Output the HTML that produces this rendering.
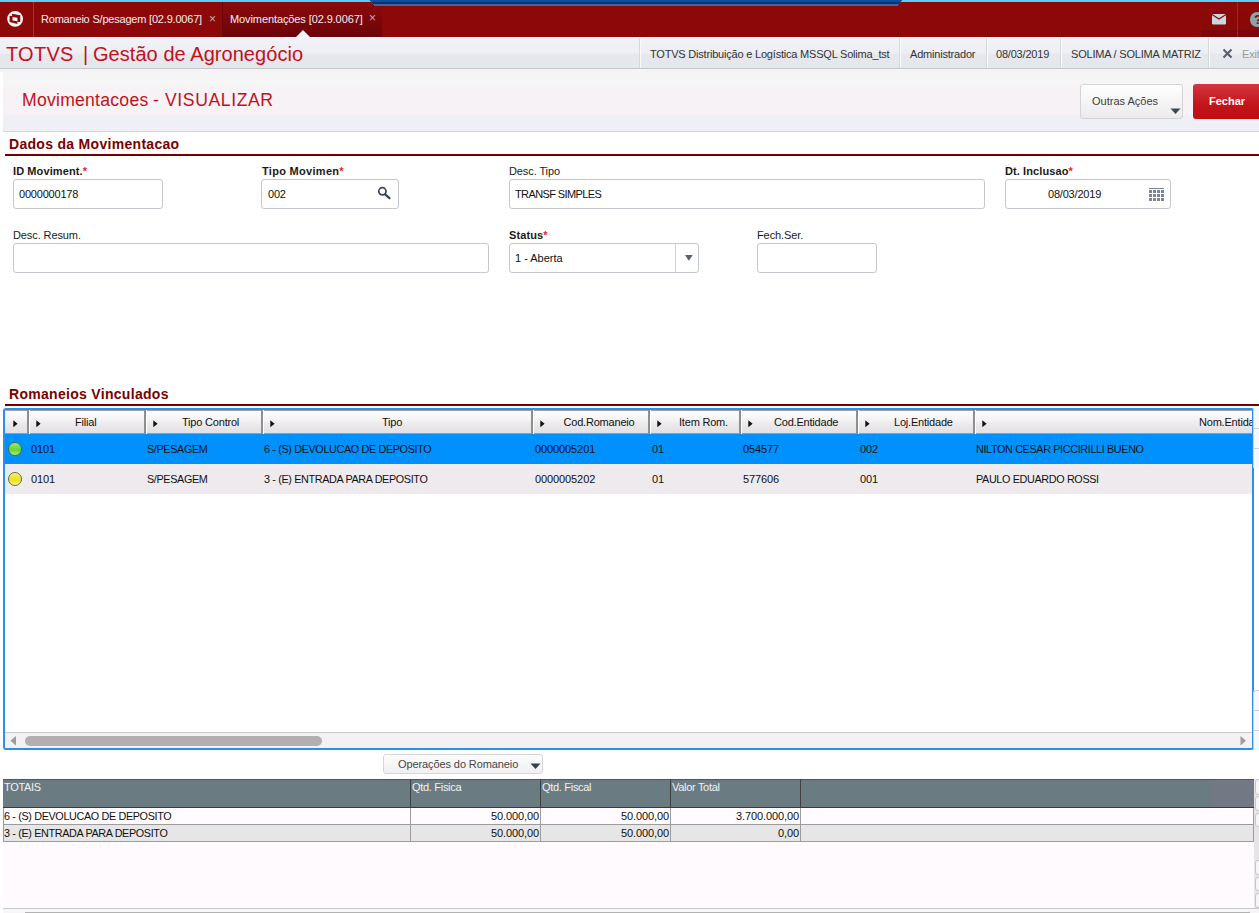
<!DOCTYPE html>
<html><head><meta charset="utf-8">
<style>
*{box-sizing:border-box;margin:0;padding:0}
html,body{width:1259px;height:913px;overflow:hidden;background:#fff;font-family:"Liberation Sans",sans-serif;font-size:11px;color:#222}
.a{position:absolute}
.t{position:absolute;white-space:nowrap;line-height:1}
#topline{left:0;top:0;width:1259px;height:2px;background:#5fcbf3}
#bar{left:0;top:2px;width:1259px;height:35px;background:#8d0909}
.tabtxt{color:#f4eef4;font-size:11px;letter-spacing:-0.2px}
.sub{left:0;top:37px;width:1259px;height:32px;background:linear-gradient(#f1f1f7 0,#eeeff5 50%,#e6e8ee 54%,#e4e7ec 100%);border-top:1px solid #fbfbfd;border-bottom:1px solid #c5c8cb}
.subtxt{color:#333;font-size:11px;letter-spacing:-0.2px}
.vsep{position:absolute;width:1px;background:#d5d9d6;box-shadow:1px 0 0 #fafafa}
.panel{left:3px;top:69px;width:1256px;height:63px;background:linear-gradient(#f6f3f6 0,#f6f3f6 3px,#f6f6f6 4px,#f6f5f6 16px,#f6f2f5 20px,#f6f2f5 45px,#eef0f6 47px,#eef0f6);border-bottom:1px solid #d6d6da}
.sect{color:#7a0000;font-size:14px;font-weight:bold;letter-spacing:0.3px}
.uline{height:2px;background:#720000}
.lbl{font-size:11px;color:#1a1a1a;letter-spacing:-0.1px}
.lblb{font-size:11px;font-weight:bold;color:#1a1a1a;letter-spacing:0.1px}
.req{color:#ed1c24}
.inp{position:absolute;border:1px solid #c4c7cb;border-radius:3px;background:#fff;height:30px}
.itxt{font-size:11px;color:#111;letter-spacing:-0.2px}
.grid{left:3px;top:408px;width:1251px;height:342px;border:2px solid #2a90ec;border-radius:3px;background:#fff;overflow:hidden}
.hdr{left:0;top:0;width:1247px;height:24px;background:linear-gradient(#fdfdfd,#f3f2f3 45%,#edebed 55%,#e2e0e2);border-top:1px solid #a8a098;border-bottom:1px solid #a49a90}
.hsep{position:absolute;top:0;width:3px;height:24px;border-left:2px solid #8e8e8e;border-right:1px solid #fff}
.tri{position:absolute;width:0;height:0;border-top:3.5px solid transparent;border-bottom:3.5px solid transparent;border-left:4px solid #111}
.htxt{font-size:11px;color:#111;letter-spacing:-0.2px}
.row{left:0;width:1247px;height:30px}
.gtxt{font-size:10.8px;color:#111;letter-spacing:-0.35px}
.gnum{font-size:11px;color:#111;letter-spacing:-0.1px}
.led{position:absolute;width:14px;height:14px;border-radius:50%}
</style></head><body>
<!-- top bars -->
<div id="topline" class="a"></div>
<div id="bar" class="a"></div>
<!-- logo -->
<svg class="a" style="left:5px;top:9px" width="20" height="20" viewBox="0 0 20 20">
  <circle cx="10.1" cy="9.8" r="6.6" fill="#fbf4f4" stroke="#fdfafa" stroke-width="2.6"/>
  <path d="M7.0,4.8 L15.3,6.2 L15.3,13.0 L12.4,13.0 L12.4,8.7 L7.2,8.0 Z" fill="#8a0a0c"/>
  <path d="M4.6,7.0 L7.5,7.0 L7.5,11.6 L12.4,12.3 L12.4,15.0 L4.6,13.0 Z" fill="#8a0a0c"/>
</svg>
<div class="a" style="left:33px;top:2px;width:1px;height:35px;background:#6a4a5a"></div>

<!-- tabs -->
<div class="t tabtxt" style="left:41px;top:14px">Romaneio S/pesagem [02.9.0067]</div>
<div class="t" style="left:209px;top:13px;color:#c9a9ad;font-size:12px">×</div>
<div class="a" style="left:223px;top:2px;width:159px;height:35px;background:linear-gradient(#8a0a0c,#6c0408)"></div>
<div class="a" style="left:222px;top:2px;width:1px;height:35px;background:#680608"></div>
<svg class="a" style="left:295px;top:29px" width="16" height="8"><polygon points="1,8 15,8 8,1" fill="#f5f2f5"/></svg>
<div class="t tabtxt" style="left:230px;top:14px;letter-spacing:-0.1px">Movimentações [02.9.0067]</div>
<div class="t" style="left:369px;top:12px;color:#c9a9ad;font-size:12px">×</div>

<!-- top blue trapezoid -->
<svg class="a" style="left:360px;top:0" width="560" height="8">
  <polygon points="9.7,0 542,0 537.8,5.5 14.2,5.5" fill="#8494cf"/>
  <polygon points="9.7,0 542,0 538.6,4.5 13.4,4.5" fill="#0d2f70"/>
  <polygon points="9.7,0 542,0 540.5,2 11.2,2" fill="#0a52a0"/>
</svg>
<!-- mail / help -->
<div class="a" style="left:1201px;top:11px;width:36px;height:26px;background:linear-gradient(#890808 0,#890808 19px,#7d0507 19px)"></div>
<div class="a" style="left:1238px;top:11px;width:21px;height:26px;background:linear-gradient(#890808 0,#890808 19px,#7d0507 19px)"></div>
<div class="a" style="left:1237px;top:2px;width:1px;height:35px;background:#6e3a42"></div>
<svg class="a" style="left:1211px;top:13px" width="16" height="12" viewBox="0 0 16 12">
  <rect x="1" y="1" width="14" height="10.5" rx="1.2" fill="#c6d9e1"/>
  <path d="M1,1.5 L8,6 L15,1.5" fill="none" stroke="#8d0909" stroke-width="1.3"/>
</svg>
<div class="a" style="left:1250px;top:12px;width:14.5px;height:14.5px;border-radius:50%;background:#8ba4ac"></div>
<div class="t" style="left:1254px;top:13px;color:#7c0708;font-weight:bold;font-size:13px">?</div>

<!-- subheader -->
<div class="a sub"></div>
<div class="t" style="left:6px;top:44px;color:#c3111a;font-size:20px;letter-spacing:0.25px">TOTVS</div>
<div class="t" style="left:83px;top:44px;color:#c3111a;font-size:20px">|</div>
<div class="t" style="left:93px;top:44px;color:#c3111a;font-size:20px;letter-spacing:0.05px">Gestão de Agronegócio</div>
<div class="vsep" style="left:639px;top:38px;height:30px"></div>
<div class="t subtxt" style="left:650px;top:49px">TOTVS Distribuição e Logística MSSQL Solima_tst</div>
<div class="vsep" style="left:899px;top:38px;height:30px"></div>
<div class="t subtxt" style="left:910px;top:49px">Administrador</div>
<div class="vsep" style="left:986px;top:38px;height:30px"></div>
<div class="t subtxt" style="left:996px;top:49px">08/03/2019</div>
<div class="vsep" style="left:1060px;top:38px;height:30px"></div>
<div class="t subtxt" style="left:1071px;top:49px">SOLIMA / SOLIMA MATRIZ</div>
<div class="vsep" style="left:1208px;top:38px;height:30px"></div>
<svg class="a" style="left:1222px;top:48px" width="11" height="11" viewBox="0 0 11 11"><path d="M1.5,1.5 L9.5,9.5 M9.5,1.5 L1.5,9.5" stroke="#575d69" stroke-width="2"/></svg>
<div class="t subtxt" style="left:1242px;top:49px;color:#9a9a9a">Exit</div>

<!-- title panel -->
<div class="a panel"></div>
<div class="t" style="left:22px;top:92px;color:#c3111a;font-size:17.6px;letter-spacing:0.25px">Movimentacoes</div>
<div class="t" style="left:153px;top:92px;color:#c3111a;font-size:17.6px">-</div>
<div class="t" style="left:165px;top:92px;color:#c3111a;font-size:17.6px;letter-spacing:0.6px">VISUALIZAR</div>
<div class="a" style="left:1080px;top:84px;width:103px;height:35px;border:1px solid #d4d4d6;border-radius:3px;background:linear-gradient(#fefefe,#f6f5f6 50%,#eceaec)"></div>
<div class="t" style="left:1092px;top:96px;color:#3c3c3c;font-size:11px">Outras Ações</div>
<svg class="a" style="left:1170px;top:108px" width="11" height="7"><polygon points="0.5,0.5 10.5,0.5 5.5,6" fill="#3c4852"/></svg>
<div class="a" style="left:1193px;top:84px;width:70px;height:35px;border-radius:3px;background:linear-gradient(#d23840,#c3141a 60%,#bd0e14)"></div>
<div class="t" style="left:1209px;top:96px;color:#fff;font-size:11px;font-weight:bold">Fechar</div>

<!-- section 1 -->
<div class="t sect" style="left:9px;top:137px">Dados da Movimentacao</div>
<div class="a uline" style="left:5px;top:154px;width:1254px"></div>

<div class="t lblb" style="left:13px;top:166px">ID Moviment.<span class="req">*</span></div>
<div class="inp" style="left:13px;top:179px;width:150px"></div>
<div class="t itxt" style="left:19px;top:189px">0000000178</div>

<div class="t lblb" style="left:262px;top:166px;letter-spacing:0.3px">Tipo Movimen<span class="req">*</span></div>
<div class="inp" style="left:261px;top:179px;width:138px"></div>
<div class="t itxt" style="left:268px;top:189px">002</div>
<svg class="a" style="left:376px;top:186px" width="16" height="16" viewBox="0 0 16 16"><circle cx="6.4" cy="5.3" r="3.6" fill="none" stroke="#3a4756" stroke-width="1.7"/><path d="M9.2,8.3 L13.4,12.2" stroke="#3a4756" stroke-width="2.3" stroke-linecap="round"/></svg>

<div class="t lbl" style="left:509px;top:166px">Desc. Tipo</div>
<div class="inp" style="left:509px;top:179px;width:476px"></div>
<div class="t itxt" style="left:515px;top:189px;letter-spacing:-0.6px">TRANSF SIMPLES</div>

<div class="t lblb" style="left:1005px;top:166px">Dt. Inclusao<span class="req">*</span></div>
<div class="inp" style="left:1005px;top:179px;width:166px"></div>
<div class="t itxt" style="left:1048px;top:189px">08/03/2019</div>
<svg class="a" style="left:1149px;top:188px" width="16" height="14" viewBox="0 0 16 14"><g fill="#7b8596"><rect x="0" y="0" width="15" height="1"/><rect x="0" y="2" width="3" height="3"/><rect x="4" y="2" width="3" height="3"/><rect x="8" y="2" width="3" height="3"/><rect x="12" y="2" width="3" height="3"/><rect x="0" y="6" width="3" height="3"/><rect x="4" y="6" width="3" height="3"/><rect x="8" y="6" width="3" height="3"/><rect x="12" y="6" width="3" height="3"/><rect x="0" y="10" width="3" height="3"/><rect x="4" y="10" width="3" height="3"/><rect x="8" y="10" width="3" height="3"/><rect x="12" y="10" width="3" height="3"/></g></svg>

<div class="t lbl" style="left:13px;top:230px">Desc. Resum.</div>
<div class="inp" style="left:13px;top:243px;width:476px"></div>

<div class="t lblb" style="left:509px;top:230px">Status<span class="req">*</span></div>
<div class="inp" style="left:509px;top:243px;width:190px"></div>
<div class="a" style="left:675px;top:244px;width:1px;height:28px;background:#cfd2d5"></div>
<div class="t itxt" style="left:515px;top:253px;letter-spacing:0">1 - Aberta</div>
<svg class="a" style="left:684px;top:254px" width="10" height="8"><polygon points="1,1 8.8,1 4.9,6.8" fill="#5b6370"/></svg>

<div class="t lbl" style="left:757px;top:230px">Fech.Ser.</div>
<div class="inp" style="left:757px;top:243px;width:120px"></div>

<!-- section 2 -->
<div class="t sect" style="left:9px;top:387px">Romaneios Vinculados</div>
<div class="a uline" style="left:5px;top:404px;width:1254px"></div>

<!-- grid -->
<div class="a grid">
 <div class="a hdr"></div>
 <div class="hsep" style="left:22px"></div>
 <div class="hsep" style="left:139px"></div>
 <div class="hsep" style="left:256px"></div>
 <div class="hsep" style="left:526px"></div>
 <div class="hsep" style="left:643px"></div>
 <div class="hsep" style="left:734px"></div>
 <div class="hsep" style="left:851px"></div>
 <div class="hsep" style="left:968px"></div>
 <svg class="a" style="left:8px;top:10px" width="5" height="8"><polygon points="0.3,0.2 4.6,3.7 0.3,7.2" fill="#111"/></svg>
 <svg class="a" style="left:31px;top:10px" width="5" height="8"><polygon points="0.3,0.2 4.6,3.7 0.3,7.2" fill="#111"/></svg>
 <svg class="a" style="left:148px;top:10px" width="5" height="8"><polygon points="0.3,0.2 4.6,3.7 0.3,7.2" fill="#111"/></svg>
 <svg class="a" style="left:265px;top:10px" width="5" height="8"><polygon points="0.3,0.2 4.6,3.7 0.3,7.2" fill="#111"/></svg>
 <svg class="a" style="left:535px;top:10px" width="5" height="8"><polygon points="0.3,0.2 4.6,3.7 0.3,7.2" fill="#111"/></svg>
 <svg class="a" style="left:652px;top:10px" width="5" height="8"><polygon points="0.3,0.2 4.6,3.7 0.3,7.2" fill="#111"/></svg>
 <svg class="a" style="left:743px;top:10px" width="5" height="8"><polygon points="0.3,0.2 4.6,3.7 0.3,7.2" fill="#111"/></svg>
 <svg class="a" style="left:860px;top:10px" width="5" height="8"><polygon points="0.3,0.2 4.6,3.7 0.3,7.2" fill="#111"/></svg>
 <svg class="a" style="left:977px;top:10px" width="5" height="8"><polygon points="0.3,0.2 4.6,3.7 0.3,7.2" fill="#111"/></svg>
 <div class="t htxt" style="left:70px;top:7px">Filial</div>
 <div class="t htxt" style="left:177px;top:7px">Tipo Control</div>
 <div class="t htxt" style="left:377px;top:7px">Tipo</div>
 <div class="t htxt" style="left:558.5px;top:7px">Cod.Romaneio</div>
 <div class="t htxt" style="left:674px;top:7px">Item Rom.</div>
 <div class="t htxt" style="left:769px;top:7px">Cod.Entidade</div>
 <div class="t htxt" style="left:889px;top:7px">Loj.Entidade</div>
 <div class="t htxt" style="left:1194px;top:7px">Nom.Entidade</div>
 <div class="a row" style="top:24px;background:#0091ff"></div>
 <div class="led" style="left:3px;top:32px;background:linear-gradient(#a8ec80 0,#7ee04a 25%,#68d82c 60%,#8ee860 85%,#b0f090 100%);border:1px solid #4e6a50"></div>
 <div class="t gnum" style="left:26px;top:34px">0101</div>
 <div class="t gtxt" style="left:142px;top:34px">S/PESAGEM</div>
 <div class="t gtxt" style="left:259px;top:34px">6 - (S) DEVOLUCAO DE DEPOSITO</div>
 <div class="t gnum" style="left:530px;top:34px">0000005201</div>
 <div class="t gnum" style="left:647px;top:34px">01</div>
 <div class="t gnum" style="left:738px;top:34px">054577</div>
 <div class="t gnum" style="left:855px;top:34px">002</div>
 <div class="t gtxt" style="left:971px;top:34px">NILTON CESAR PICCIRILLI BUENO</div>
 <div class="a row" style="top:54px;background:#eeeaed"></div>
 <div class="led" style="left:3px;top:62px;background:linear-gradient(#f8f490 0,#f0ea40 25%,#ece420 60%,#f2ee60 85%,#f8f6a0 100%);border:1px solid #6a6a50"></div>
 <div class="t gnum" style="left:26px;top:64px">0101</div>
 <div class="t gtxt" style="left:142px;top:64px">S/PESAGEM</div>
 <div class="t gtxt" style="left:259px;top:64px">3 - (E) ENTRADA PARA DEPOSITO</div>
 <div class="t gnum" style="left:530px;top:64px">0000005202</div>
 <div class="t gnum" style="left:647px;top:64px">01</div>
 <div class="t gnum" style="left:738px;top:64px">577606</div>
 <div class="t gnum" style="left:855px;top:64px">001</div>
 <div class="t gtxt" style="left:971px;top:64px">PAULO EDUARDO ROSSI</div>
 <div class="a" style="left:0;top:322px;width:1247px;height:16px;background:#f4f1f4;border-top:1px solid #c8c8c8"></div>
 <svg class="a" style="left:5px;top:326px" width="7" height="10"><polygon points="6,0 6,9.5 0.5,4.75" fill="#9c9c9c"/></svg>
 <div class="a" style="left:20px;top:326px;width:297px;height:10px;border-radius:5px;background:#b2afb2"></div>
 <svg class="a" style="left:1235px;top:326px" width="7" height="10"><polygon points="0.5,0 0.5,9.5 6,4.75" fill="#9c9c9c"/></svg>
</div>
<!-- operations button -->
<div class="a" style="left:383px;top:754px;width:160px;height:20px;border:1px solid #d6d6d8;border-radius:3px;background:linear-gradient(#fdfdfd,#f1eff1)"></div>
<div class="t" style="left:398px;top:759px;color:#454545;font-size:11px;letter-spacing:-0.1px">Operações do Romaneio</div>
<svg class="a" style="left:530px;top:763px" width="11" height="7"><polygon points="0.5,0.5 10.5,0.5 5.5,6" fill="#37414b"/></svg>

<!-- totals -->
<div class="a" style="left:3px;top:779px;width:1253px;height:134px;background:#fefafe"></div>
<div class="a" style="left:3px;top:779px;width:1251px;height:29px;background:#6b7b82;border-top:1px solid #555;border-bottom:1px solid #3a3a3a"></div>
<div class="a" style="left:1212px;top:780px;width:42px;height:27px;background:#727884"></div>
<div class="a" style="left:410px;top:779px;width:1px;height:29px;background:#404040"></div>
<div class="a" style="left:540px;top:779px;width:1px;height:29px;background:#404040"></div>
<div class="a" style="left:670px;top:779px;width:1px;height:29px;background:#404040"></div>
<div class="a" style="left:800px;top:779px;width:1px;height:29px;background:#404040"></div>
<div class="t" style="left:4px;top:782px;color:#f2f2f2;font-size:11px;letter-spacing:-0.3px">TOTAIS</div>
<div class="t" style="left:412px;top:782px;color:#f2f2f2;font-size:11px;letter-spacing:-0.3px">Qtd. Fisica</div>
<div class="t" style="left:542px;top:782px;color:#f2f2f2;font-size:11px;letter-spacing:-0.3px">Qtd. Fiscal</div>
<div class="t" style="left:672px;top:782px;color:#f2f2f2;font-size:11px;letter-spacing:-0.3px">Valor Total</div>

<div class="a" style="left:3px;top:808px;width:1251px;height:17px;background:#fffbfe;border-bottom:1px solid #9c9c9c"></div>
<div class="a" style="left:3px;top:825px;width:1251px;height:17px;background:#e6e6e6;border-bottom:1px solid #9c9c9c"></div>
<div class="a" style="left:3px;top:808px;width:1px;height:34px;background:#9c9c9c"></div>
<div class="a" style="left:410px;top:808px;width:1px;height:34px;background:#9c9c9c"></div>
<div class="a" style="left:540px;top:808px;width:1px;height:34px;background:#9c9c9c"></div>
<div class="a" style="left:670px;top:808px;width:1px;height:34px;background:#9c9c9c"></div>
<div class="a" style="left:800px;top:808px;width:1px;height:34px;background:#9c9c9c"></div>
<div class="a" style="left:1253px;top:808px;width:1px;height:34px;background:#9c9c9c"></div>
<div class="t gtxt" style="left:4px;top:811px">6 - (S) DEVOLUCAO DE DEPOSITO</div>
<div class="t gtxt" style="left:4px;top:828px">3 - (E) ENTRADA PARA DEPOSITO</div>
<div class="t gnum" style="left:411px;top:811px;width:128px;text-align:right">50.000,00</div>
<div class="t gnum" style="left:541px;top:811px;width:128px;text-align:right">50.000,00</div>
<div class="t gnum" style="left:671px;top:811px;width:128px;text-align:right">3.700.000,00</div>
<div class="t gnum" style="left:411px;top:828px;width:128px;text-align:right">50.000,00</div>
<div class="t gnum" style="left:541px;top:828px;width:128px;text-align:right">50.000,00</div>
<div class="t gnum" style="left:671px;top:828px;width:128px;text-align:right">0,00</div>
<div class="a" style="left:3px;top:908px;width:1256px;height:1px;background:#c6c9ca"></div>
<div class="a" style="left:3px;top:909px;width:1256px;height:4px;background:#f7f5f7"></div>
<div class="a" style="left:25px;top:912px;width:1225px;height:1px;background:#b2b2b2"></div>
<!-- white strip left of content -->
<div class="a" style="left:0;top:72px;width:3px;height:841px;background:#fff"></div>
<div class="a" style="left:0;top:69px;width:3px;height:3px;background:#f6f3f6"></div>

<!-- right edge buttons -->
<div class="a" style="left:1253px;top:408px;width:6px;height:60px;background:#f8f7f9;border-left:1px solid #d2d2d4"></div>
<div class="a" style="left:1254px;top:428px;width:5px;height:1px;background:#cfcfd1"></div>
<div class="a" style="left:1254px;top:448px;width:5px;height:1px;background:#cfcfd1"></div>
<div class="a" style="left:1253px;top:690px;width:6px;height:60px;background:#f8f7f9;border-left:1px solid #d2d2d4;border-top:1px solid #d2d2d4;border-top-left-radius:3px"></div>
<div class="a" style="left:1254px;top:710px;width:5px;height:1px;background:#cfcfd1"></div>
<div class="a" style="left:1254px;top:730px;width:5px;height:1px;background:#cfcfd1"></div>
<div class="a" style="left:1254px;top:779px;width:5px;height:129px;background:#e6e4e6"></div>
<div class="a" style="left:1255px;top:779px;width:6px;height:16px;background:#f6f6f6;border:1px solid #c6c6c6;border-radius:3px 0 0 3px"></div>
<div class="a" style="left:1255px;top:796px;width:6px;height:15px;background:#f6f6f6;border:1px solid #c6c6c6;border-radius:3px 0 0 3px"></div>
<div class="a" style="left:1255px;top:813px;width:6px;height:14px;background:#f6f6f6;border:1px solid #c6c6c6;border-radius:3px 0 0 3px"></div>
<div class="a" style="left:1255px;top:860px;width:6px;height:15px;background:#f6f6f6;border:1px solid #c6c6c6;border-radius:3px 0 0 3px"></div>
<div class="a" style="left:1255px;top:877px;width:6px;height:14px;background:#f6f6f6;border:1px solid #c6c6c6;border-radius:3px 0 0 3px"></div>
<div class="a" style="left:1255px;top:893px;width:6px;height:15px;background:#f6f6f6;border:1px solid #c6c6c6;border-radius:3px 0 0 3px"></div>
</body></html>
